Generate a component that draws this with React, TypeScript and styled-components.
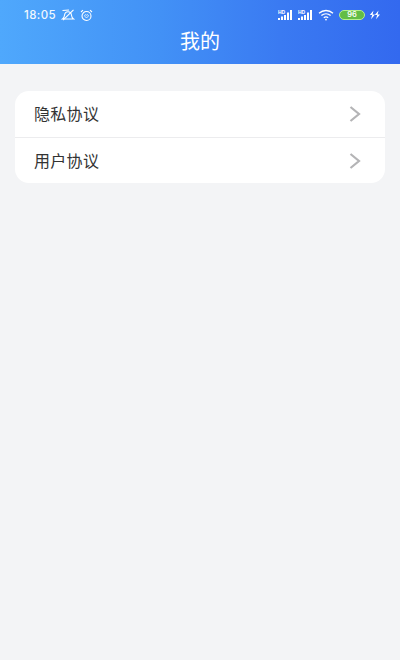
import React from 'react';
import styled, { createGlobalStyle } from 'styled-components';

const GlobalStyle = createGlobalStyle`
    html, body {
        margin: 0;
        padding: 0;
        background: #f3f4f6;
    }
    * {
        box-sizing: border-box;
    }
`;

const Page = styled.div`
    width: 400px;
    height: 660px;
    background: #f3f4f6;
    font-family: 'Roboto', 'Noto Sans CJK SC', sans-serif;
    overflow: hidden;
`;

const Header = styled.header`
    height: 64px;
    background: linear-gradient(90deg, #4fa8fc 0%, #4291f6 40%, #3a7af2 70%, #3369ef 100%);
    color: #fff;
`;

const StatusBar = styled.div`
    height: 28px;
    padding: 2px 20px 0 24px;
    display: flex;
    align-items: center;
    justify-content: space-between;
`;

const StatusGroup = styled.div<{ $gap: number }>`
    display: flex;
    align-items: center;
    gap: ${({ $gap }) => $gap}px;
`;

const Time = styled.span`
    font-family: 'Inter', 'Liberation Sans', sans-serif;
    font-size: 11.5px;
    font-weight: 500;
    letter-spacing: 0.4px;
    opacity: 0.92;
`;

const Title = styled.h1`
    margin: 0;
    height: 28px;
    font-size: 20px;
    font-weight: 400;
    line-height: 29px;
    text-align: center;
`;

const Battery = styled.div`
    width: 26px;
    height: 10px;
    border: 1px solid #b5f08e;
    border-radius: 5px;
    background: #63bd45;
    color: #fff;
    font-family: 'Inter', 'Liberation Sans', sans-serif;
    font-size: 7.5px;
    font-weight: 600;
    line-height: 8px;
    text-align: center;
`;

const Card = styled.ul`
    list-style: none;
    margin: 27px 15px 0;
    padding: 0;
    background: #fff;
    border-radius: 14px;
`;

const Row = styled.li`
    height: 45px;
    padding: 0 24px 0 19px;
    display: flex;
    align-items: center;
    justify-content: space-between;
    font-size: 16px;
    letter-spacing: 0.3px;
    color: #333;

    &:not(:last-child) {
        height: 47px;
        border-bottom: 1px solid #ececee;
    }
`;

const RowLabel = styled.span`
    margin-top: -2px;
`;

const Signal = () => (
    <svg width="16" height="12" viewBox="0 0 16 12" fill="none">
        <text x="0" y="4.5" fontSize="5" fontWeight="700" fill="#fff" fontFamily="Liberation Sans, sans-serif">
            HD
        </text>
        <g fill="#fff">
            <rect x="0" y="9" width="2" height="2" />
            <rect x="3" y="7.5" width="2" height="3.5" />
            <rect x="6" y="6" width="2" height="5" />
            <rect x="9" y="3.5" width="2" height="7.5" />
            <rect x="12" y="1" width="2" height="10" />
        </g>
    </svg>
);

const Wifi = () => (
    <svg width="17" height="12" viewBox="0 0 17 12" fill="none" stroke="#fff" strokeWidth="1.3">
        <path d="M1 4.2C5 .6 11 .6 15 4.2" />
        <path d="M3.4 6.6c2.7-2.4 6.5-2.4 9.2 0" />
        <path d="M5.8 8.8c1.4-1.1 3-1.1 4.4 0" />
        <circle cx="8" cy="10.6" r="0.9" fill="#fff" stroke="none" />
    </svg>
);

const Bolt = () => (
    <svg width="11" height="10" viewBox="0 0 11 10" fill="#fff">
        <path d="M4.5 0.5 0.8 5h2.4L2 9.2 6 4.6H3.6Z" />
        <path d="M9.5 0.5 5.8 5h2.4L7 9.2 11 4.6H8.6Z" />
    </svg>
);

const MuteBell = () => (
    <svg width="14" height="12" viewBox="0 0 14 12" fill="none" stroke="#fff" strokeWidth="1.1">
        <path d="M1.500 10h11c-1.200-.8-1.800-2-2-3.800C10.200 4 9 2.800 7 2.800S3.800 4 3.500 6.200C3.300 8 2.700 9.200 1.500 10Z" />
        <path d="M12.500 .8 2 11.200" />
        <path d="M1.500 1.500 8 1" />
    </svg>
);

const Alarm = () => (
    <svg width="13" height="13" viewBox="0 0 13 13" fill="none" stroke="#fff" strokeWidth="1.1">
        <circle cx="6.500" cy="7" r="4.500" />
        <path d="M1 3 3 1.200M12 3l-2-1.800" />
        <path d="M6.500 9 4.800 7.200c-.8-1 .8-2.200 1.700-1 .9-1.200 2.500 0 1.700 1Z" strokeWidth="0.8" />
    </svg>
);

const Chevron = () => (
    <svg width="12" height="16" viewBox="0 0 12 16" fill="none" stroke="#b4b4b6" strokeWidth="2.200">
        <path d="M1.500 1 10 8l-8.500 7" />
    </svg>
);

const items = ['隐私协议', '用户协议'];

const App = () => (
    <Page>
        <GlobalStyle />
        <Header>
            <StatusBar>
                <StatusGroup $gap={5}>
                    <Time>18:05</Time>
                    <MuteBell />
                    <Alarm />
                </StatusGroup>
                <StatusGroup $gap={4}>
                    <Signal />
                    <Signal />
                    <Wifi />
                    <Battery>96</Battery>
                    <Bolt />
                </StatusGroup>
            </StatusBar>
            <Title>我的</Title>
        </Header>
        <Card>
            {items.map(item => (
                <Row key={item}>
                    <RowLabel>{item}</RowLabel>
                    <Chevron />
                </Row>
            ))}
        </Card>
    </Page>
);

export default App;
